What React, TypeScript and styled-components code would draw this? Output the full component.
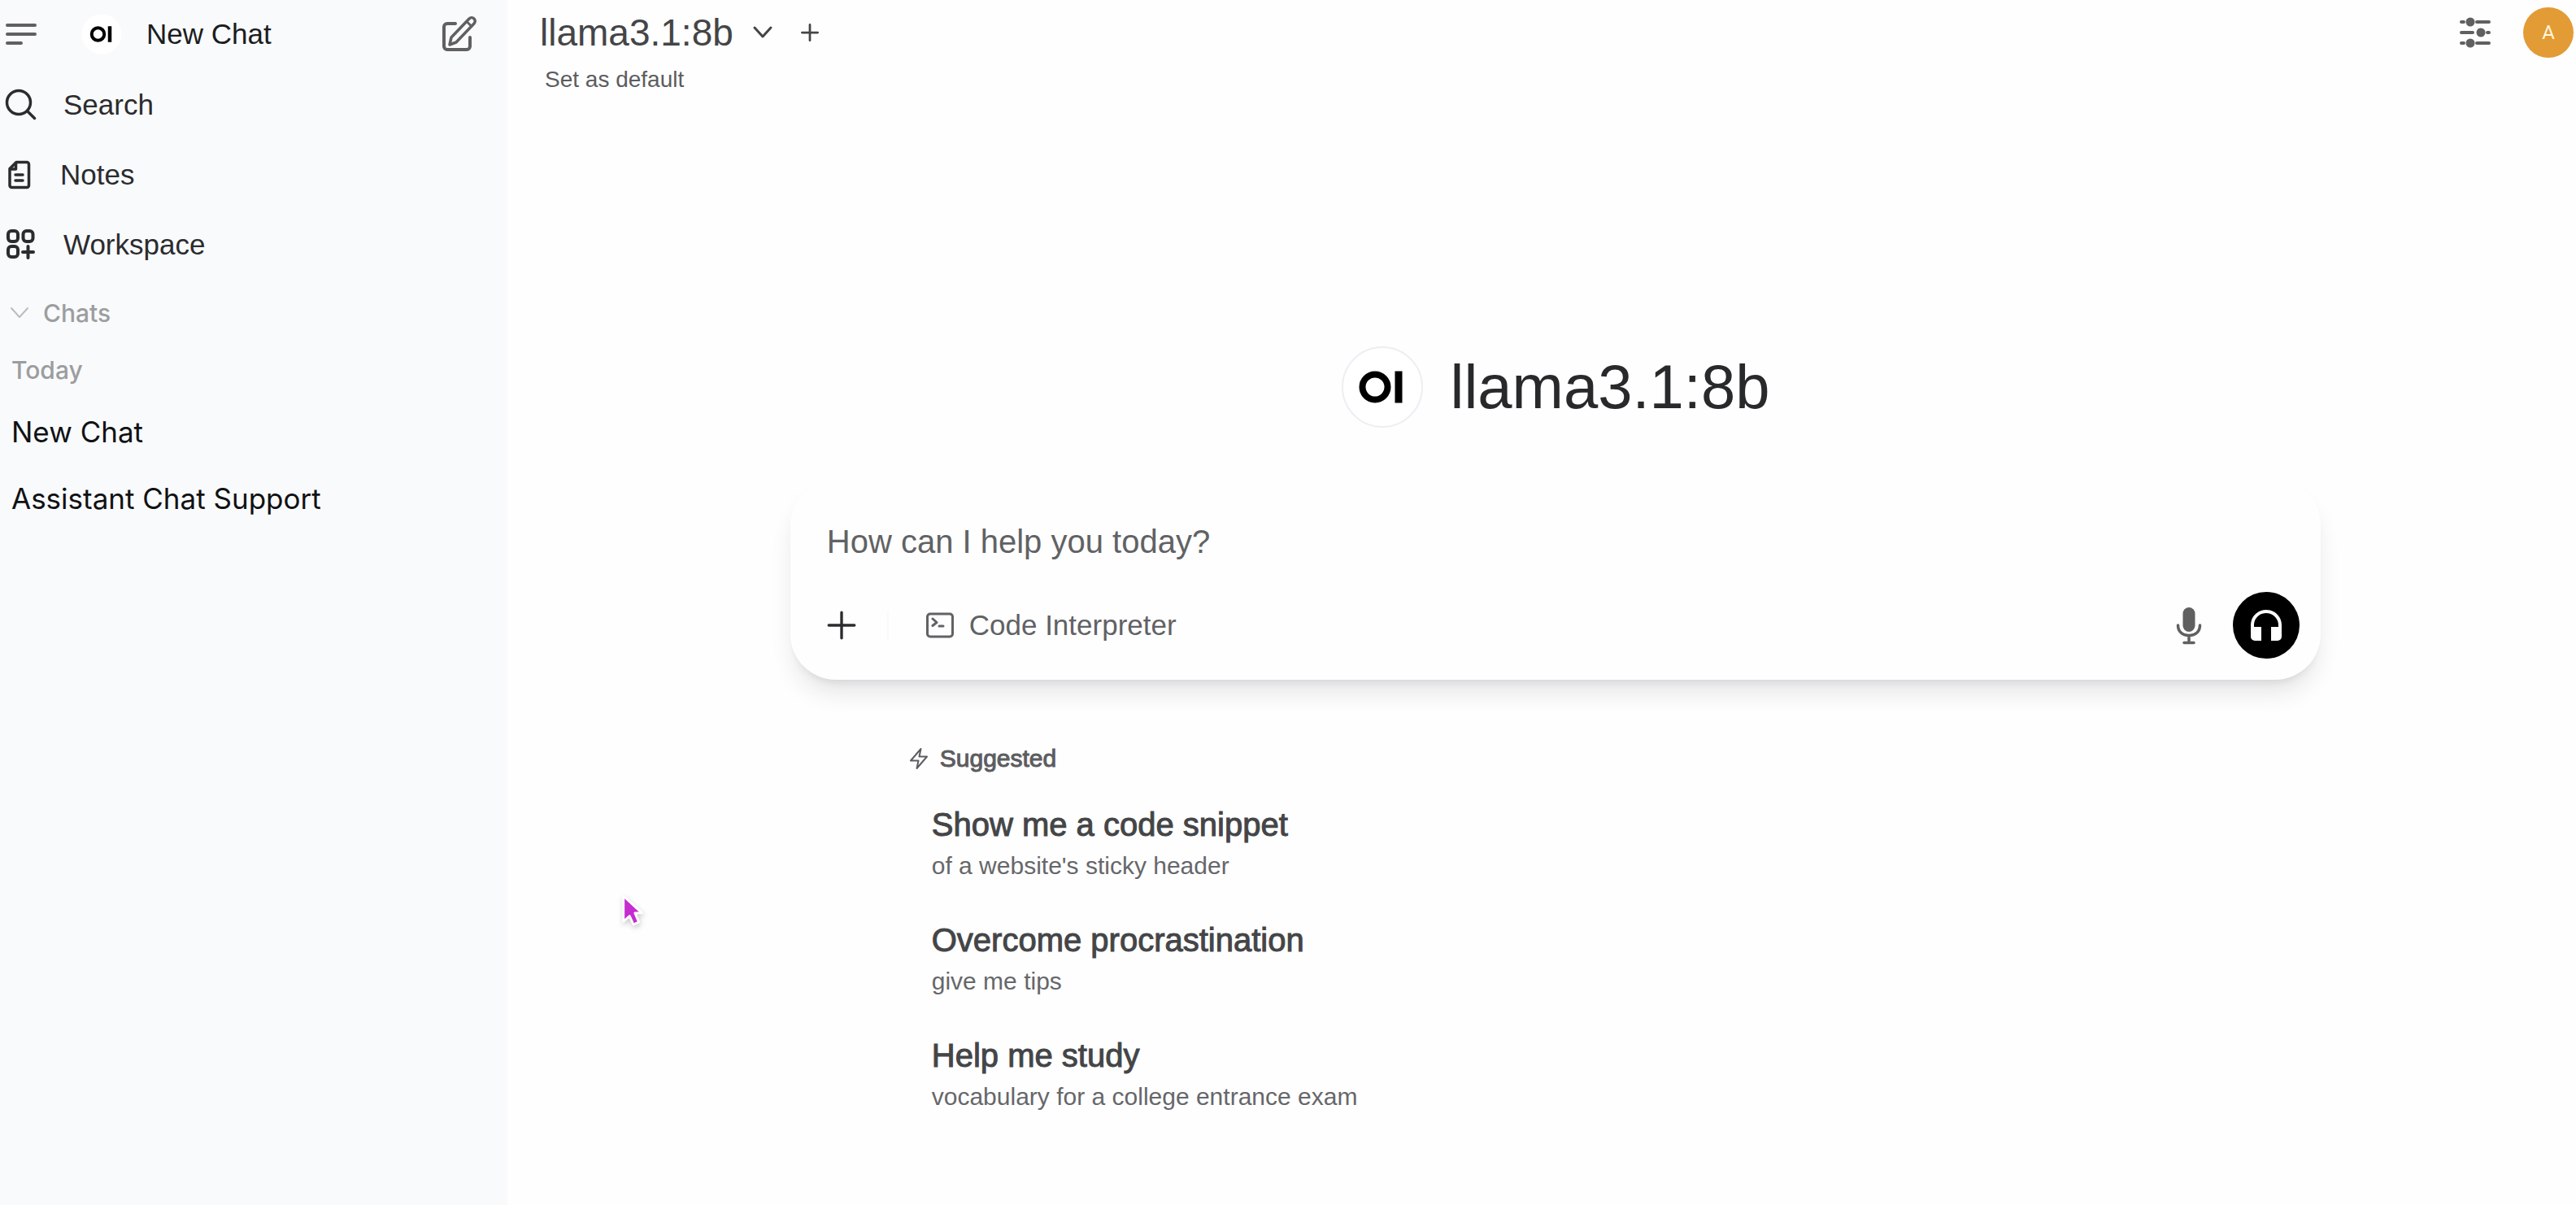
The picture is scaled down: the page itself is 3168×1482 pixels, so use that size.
import React from "react";
import styled, { createGlobalStyle } from "styled-components";

const SANS = `"Liberation Sans", Arial, sans-serif`;
const INTER = `Inter, "Liberation Sans", sans-serif`;

const GlobalStyle = createGlobalStyle`
  *, *::before, *::after { box-sizing: border-box; }
  body { margin: 0; background: #fefefe; font-family: ${SANS}; }
  h1, h2, p, ul { margin: 0; padding: 0; }
  ul { list-style: none; }
  button, textarea { font: inherit; color: inherit; background: none; border: 0; padding: 0; margin: 0; }
  button { cursor: pointer; text-align: left; }
  svg { display: block; flex: none; }
`;

const Page = styled.div`
  display: flex;
  min-height: 100vh;
  overflow: hidden;
`;

const Sidebar = styled.aside`
  flex: none;
  width: 624px;
  background: #f9fafc;
`;

const SidebarHeader = styled.header`
  display: flex;
  align-items: center;
  height: 84px;
  margin-bottom: 2px;
  padding: 0 36px 0 4px;
`;

const IconButton = styled.button<{ $color?: string }>`
  display: flex;
  align-items: center;
  justify-content: center;
  color: ${(p) => p.$color ?? "#606060"};
`;

const NewChatButton = styled.button`
  display: flex;
  align-items: center;
  flex: 1;
  gap: 30px;
  margin-left: 52px;
  font-size: 35px;
  line-height: 48px;
  color: #1c1d1f;
`;

const NavItem = styled.a`
  display: flex;
  align-items: center;
  gap: 30px;
  height: 86px;
  padding-left: 4px;
  font-size: 35px;
  color: #2b2c2e;
  text-decoration: none;
`;

const SectionToggle = styled.button`
  display: flex;
  align-items: center;
  gap: 16px;
  width: 100%;
  height: 82px;
  padding-left: 11px;
  font: 500 30px/40px ${INTER};
  color: #9c9d9f;
`;

const DayLabel = styled.h2`
  margin-bottom: 7px;
  padding: 1px 0 0 14px;
  font: 500 30px/56px ${INTER};
  color: #9c9d9f;
`;

const ChatLink = styled.a`
  display: block;
  padding-left: 14px;
  font: 400 35px/82px ${INTER};
  color: #111214;
  text-decoration: none;
`;

const Main = styled.main`
  flex: 1;
  min-width: 0;
`;

const TopBar = styled.header`
  display: flex;
  justify-content: space-between;
  align-items: flex-start;
  padding-left: 40px;
`;

const ModelRow = styled.div`
  display: flex;
  align-items: center;
  height: 80px;
`;

const ModelButton = styled.button`
  display: flex;
  align-items: center;
  gap: 23px;
  font-size: 46px;
  color: #444547;
`;

const AddModel = styled(IconButton)`
  margin-left: 34px;
`;

const DefaultButton = styled.button`
  display: block;
  padding-left: 6px;
  font-size: 28px;
  line-height: 36px;
  color: #5c5d5f;
`;

const TopActions = styled.div`
  display: flex;
  align-items: center;
  gap: 38px;
  height: 80px;
  padding-right: 3px;
`;

const Avatar = styled.button`
  width: 62px;
  height: 62px;
  border-radius: 50%;
  background: #e39b35;
  color: #fff6dc;
  font: 400 24px/62px Roboto, ${SANS};
  text-align: center;
`;

const Stage = styled.div`
  padding-left: 34px;
`;

const Center = styled.div`
  display: flex;
  flex-direction: column;
  width: 75%;
  max-width: 1886px;
  margin: 310px auto 0;
`;

const Hero = styled.div`
  display: flex;
  align-items: center;
  justify-content: center;
  gap: 34px;
  height: 100px;
  margin-bottom: 64px;
`;

const HeroTitle = styled.h1`
  font-weight: 400;
  font-size: 76px;
  line-height: 100px;
  color: #28292b;
`;

const Composer = styled.form`
  padding: 48px 26px 26px 45px;
  border-radius: 56px;
  background: #fefefe;
  box-shadow: 0 20px 30px -6px rgba(30, 34, 44, 0.12), 0 8px 12px -8px rgba(30, 34, 44, 0.14);
`;

const Prompt = styled.textarea`
  display: block;
  width: 100%;
  height: 56px;
  margin-bottom: 34px;
  font-size: 40px;
  line-height: 56px;
  resize: none;
  outline: none;
  overflow: hidden;
  &::placeholder { color: #616264; opacity: 1; }
`;

const Controls = styled.div`
  display: flex;
  align-items: center;
  height: 82px;
`;

const Divider = styled.span`
  width: 2px;
  height: 36px;
  margin: 0 45px 0 38px;
  background: #fafafb;
`;

const ToolButton = styled.button`
  display: flex;
  align-items: center;
  gap: 18px;
  margin-right: auto;
  font-size: 35px;
  line-height: 48px;
  color: #616264;
`;

const VoiceButton = styled(IconButton)`
  width: 82px;
  height: 82px;
  margin-left: 38px;
  border-radius: 50%;
  background: #000;
  color: #fff;
`;

const Suggestions = styled.section`
  padding: 77px 0 0 146px;
`;

const SuggestedLabel = styled.h2`
  display: flex;
  align-items: center;
  gap: 14px;
  margin-bottom: 16px;
  font-weight: 400;
  font-size: 30px;
  line-height: 40px;
  color: #5c5d5f;
  -webkit-text-stroke: 1px currentColor;
`;

const Suggestion = styled.button`
  display: block;
  width: 100%;
  padding: 20px 0 20px 28px;
`;

const SuggestionTitle = styled.span`
  display: block;
  font-size: 40px;
  line-height: 50px;
  color: #444547;
  -webkit-text-stroke: 1px currentColor;
`;

const SuggestionText = styled.span`
  display: block;
  font-size: 30px;
  line-height: 52px;
  color: #66676a;
`;

const Pointer = styled.svg`
  position: absolute;
  left: 762px;
  top: 1096px;
  pointer-events: none;
  filter: drop-shadow(1px 3px 3px rgba(0, 0, 0, 0.2));
`;

const stroke = {
  fill: "none",
  stroke: "currentColor",
  strokeLinecap: "round" as const,
  strokeLinejoin: "round" as const,
};

const Logo = ({ size, ring }: { size: number; ring?: boolean }) => (
  <svg width={size} height={size} viewBox="0 0 100 100" aria-hidden="true">
    <circle cx="50" cy="50" r="49" fill="#fff" stroke={ring ? "#eceef2" : "none"} strokeWidth="2" />
    <circle cx="41" cy="50" r="15.5" fill="none" stroke="#000" strokeWidth="8" />
    <rect x="65.5" y="30.5" width="9" height="39" fill="#000" />
  </svg>
);

const MenuIcon = () => (
  <svg width="44" height="44" viewBox="0 0 44 44" {...stroke} strokeWidth="4">
    <path d="M5 11h34M5 22h34M5 33h17" />
  </svg>
);

const EditIcon = () => (
  <svg width="48" height="48" viewBox="0 0 48 48" {...stroke} strokeWidth="4">
    <path d="M20 11H10a4 4 0 0 0-4 4v24a4 4 0 0 0 4 4h24a4 4 0 0 0 4-4V28" />
    <path d="M37 5a4.200 4.200 0 0 1 6 6L21 34l-8 3 2-9Z" strokeWidth="3.5" />
    <path d="m34 8.500 6 6" strokeWidth="3" />
  </svg>
);

const SearchIcon = () => (
  <svg width="44" height="44" viewBox="0 0 44 44" {...stroke} strokeWidth="3.5">
    <circle cx="19" cy="19" r="14.5" />
    <path d="m29.500 29.500 9 9" />
  </svg>
);

const NotesIcon = () => (
  <svg width="40" height="44" viewBox="0 0 40 44" {...stroke} strokeWidth="3.5">
    <path d="M16 6.500h13a2.500 2.500 0 0 1 2.500 2.500v26a2.500 2.500 0 0 1-2.500 2.500H10.500a2.500 2.500 0 0 1-2.500-2.500V14.500Z" />
    <path d="M15.500 7.500v7.500H8.500M15 22h9M15 29h9" />
  </svg>
);

const WorkspaceIcon = () => (
  <svg width="44" height="44" viewBox="0 0 44 44" {...stroke} strokeWidth="4">
    <rect x="6" y="5" width="12" height="13" rx="4" />
    <rect x="24.500" y="5" width="12" height="13" rx="4" />
    <rect x="6" y="24" width="12" height="13" rx="4" />
    <path d="M30.500 24v14M24 31h13" />
  </svg>
);

const Chevron = ({ size, weight, color }: { size: number; weight: number; color?: string }) => (
  <svg width={size} height={size} viewBox="0 0 26 26" {...stroke} stroke={color ?? "currentColor"} strokeWidth={weight}>
    <path d="m3 7 10 11L23 7" />
  </svg>
);

const PlusIcon = ({ size, weight }: { size: number; weight: number }) => (
  <svg width={size} height={size} viewBox="0 0 32 32" {...stroke} strokeWidth={weight}>
    <path d="M16 2v28M2 16h28" />
  </svg>
);

const SlidersIcon = () => (
  <svg width="42" height="42" viewBox="0 0 42 42" {...stroke} strokeWidth="4">
    <path d="M4 8h3M23 8h15M4 21h14M36 21h2M4 34h3M23 34h15" />
    <g fill="currentColor" stroke="none">
      <circle cx="15" cy="8" r="5.5" />
      <circle cx="28" cy="21" r="5.5" />
      <circle cx="15" cy="34" r="5.5" />
    </g>
  </svg>
);

const TerminalIcon = () => (
  <svg width="36" height="36" viewBox="0 0 36 36" {...stroke} strokeWidth="3">
    <rect x="2.500" y="4" width="31" height="28" rx="3.5" />
    <path d="m9 10 5 4.500L9 18.500M17 19h5" />
  </svg>
);

const MicIcon = () => (
  <svg width="32" height="48" viewBox="0 0 32 48" {...stroke} strokeWidth="3.5">
    <rect x="8.500" y="2" width="15" height="30" rx="7.5" fill="currentColor" stroke="none" />
    <path d="M2.500 24c0 7.500 5 12.500 13.500 12.500S29.500 31.500 29.500 24M16 37v7M10 45.500h12" />
  </svg>
);

const HeadphonesIcon = () => (
  <svg width="40" height="40" viewBox="0 0 40 40">
    <path
      fill="currentColor"
      d="M20 1C9.500 1 1 9.200 1 20v14a5 5 0 0 0 5 5h8V22H5v-2c0-8.600 6.700-15 15-15s15 6.400 15 15v2h-9v17h8a5 5 0 0 0 5-5V20C39 9.200 30.500 1 20 1Z"
    />
  </svg>
);

const BoltIcon = () => (
  <svg width="24" height="28" viewBox="0 0 24 28" {...stroke} strokeWidth="2">
    <path d="M14.500 2 2 16.500h9.500L9.500 26 22 11.500h-9.500Z" />
  </svg>
);

const suggestions = [
  { title: "Show me a code snippet", text: "of a website's sticky header" },
  { title: "Overcome procrastination", text: "give me tips" },
  { title: "Help me study", text: "vocabulary for a college entrance exam" },
];

const chats = ["New Chat", "Assistant Chat Support"];

export default function App() {
  return (
    <>
      <GlobalStyle />
      <Page>
        <Sidebar>
          <SidebarHeader>
            <IconButton aria-label="Toggle sidebar"><MenuIcon /></IconButton>
            <NewChatButton><Logo size={50} />New Chat</NewChatButton>
            <IconButton aria-label="Compose"><EditIcon /></IconButton>
          </SidebarHeader>
          <nav>
            <NavItem href="#search"><SearchIcon />Search</NavItem>
            <NavItem href="#notes"><NotesIcon />Notes</NavItem>
            <NavItem href="#workspace"><WorkspaceIcon />Workspace</NavItem>
          </nav>
          <SectionToggle><Chevron size={26} weight={2} color="#bcbdbf" />Chats</SectionToggle>
          <DayLabel>Today</DayLabel>
          <ul>
            {chats.map((name) => (
              <li key={name}><ChatLink href="#chat">{name}</ChatLink></li>
            ))}
          </ul>
        </Sidebar>
        <Main>
          <TopBar>
            <div>
              <ModelRow>
                <ModelButton>llama3.1:8b<Chevron size={26} weight={3} /></ModelButton>
                <AddModel aria-label="Add model" $color="#444547"><PlusIcon size={22} weight={4} /></AddModel>
              </ModelRow>
              <DefaultButton>Set as default</DefaultButton>
            </div>
            <TopActions>
              <IconButton aria-label="Controls"><SlidersIcon /></IconButton>
              <Avatar>A</Avatar>
            </TopActions>
          </TopBar>
          <Stage>
            <Center>
              <Hero>
                <Logo size={100} ring />
                <HeroTitle>llama3.1:8b</HeroTitle>
              </Hero>
              <Composer onSubmit={(e) => e.preventDefault()}>
                <Prompt aria-label="Message" rows={1} placeholder="How can I help you today?" />
                <Controls>
                  <IconButton type="button" aria-label="More" $color="#2b2c2e"><PlusIcon size={36} weight={3} /></IconButton>
                  <Divider />
                  <ToolButton type="button"><TerminalIcon />Code Interpreter</ToolButton>
                  <IconButton type="button" aria-label="Dictate"><MicIcon /></IconButton>
                  <VoiceButton type="button" aria-label="Voice mode" $color="#fff"><HeadphonesIcon /></VoiceButton>
                </Controls>
              </Composer>
              <Suggestions>
                <SuggestedLabel><BoltIcon />Suggested</SuggestedLabel>
                {suggestions.map((s) => (
                  <Suggestion key={s.title}>
                    <SuggestionTitle>{s.title}</SuggestionTitle>
                    <SuggestionText>{s.text}</SuggestionText>
                  </Suggestion>
                ))}
              </Suggestions>
            </Center>
          </Stage>
        </Main>
      </Page>
      <Pointer width="34" height="48" viewBox="0 0 36 50" aria-hidden="true">
        <path
          d="M5 6v33l8-7 5 11 7-3-5-12h9Z"
          fill="#c62bd0"
          stroke="#fff"
          strokeWidth="3"
          strokeLinejoin="round"
        />
      </Pointer>
    </>
  );
}
